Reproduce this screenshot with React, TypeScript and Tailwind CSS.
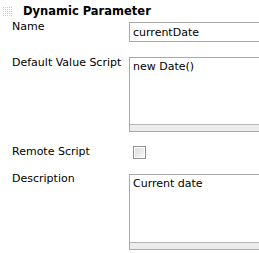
import React from "react";

const font = { fontFamily: '"DejaVu Sans", Verdana, sans-serif' };

const Grip = () => (
  <svg width="9" height="9" viewBox="0 0 9 9" className="shrink-0">
    {[0, 2, 4, 6, 8].map((y) =>
      [0, 2, 4, 6, 8].map((x) => (
        <rect key={`${x}-${y}`} x={x} y={y} width="1" height="1" fill="#c8c8c8" />
      ))
    )}
  </svg>
);

const Area = ({ text, h }: { text: string; h: string }) => (
  <div className={`flex flex-col w-[160px] border border-[#a9a9a9] bg-white ${h}`}>
    <div className="flex-1 px-[3px] pt-[2px] text-[11px] leading-[14px] text-black">{text}</div>
    <div className="h-[7px] border-t border-[#b5b5b5] bg-[#ececec]" />
  </div>
);

const label = "shrink-0 w-[129px] pl-3 text-[11px] leading-[13px] whitespace-nowrap";

export default function App() {
  return (
    <div className="w-[259px] h-[253px] overflow-hidden bg-white text-black" style={font}>
      <div className="flex items-center gap-[11px] pl-[3px] pt-[3px] h-[19px]">
        <Grip />
        <span className="text-[11.5px] font-bold leading-[13px] whitespace-nowrap">Dynamic Parameter</span>
      </div>

      <div className="flex items-start mt-[1px]">
        <div className={label}>Name</div>
        <div className="shrink-0 mt-[2px] w-[160px] h-[20px] border border-[#a9a9a9] px-[3px] pt-[3px] text-[11px] leading-[14px]">
          currentDate
        </div>
      </div>

      <div className="flex items-start mt-[14px]">
        <div className={label}>Default Value Script</div>
        <div className="shrink-0 mt-[1px]">
          <Area text="new Date()" h="h-[75px]" />
        </div>
      </div>

      <div className="flex items-start mt-[13px]">
        <div className={`${label} w-[133px]`}>Remote Script</div>
        <div className="shrink-0 mt-[1px] w-[13px] h-[13px] border border-[#8f8f8f] p-[1px]">
          <div className="w-full h-full bg-gradient-to-br from-[#dcdcdc] to-[#f8f8f8]" />
        </div>
      </div>

      <div className="flex items-start mt-[13px]">
        <div className={label}>Description</div>
        <div className="shrink-0 mt-[2px]">
          <Area text="Current date" h="h-[76px]" />
        </div>
      </div>
    </div>
  );
}
